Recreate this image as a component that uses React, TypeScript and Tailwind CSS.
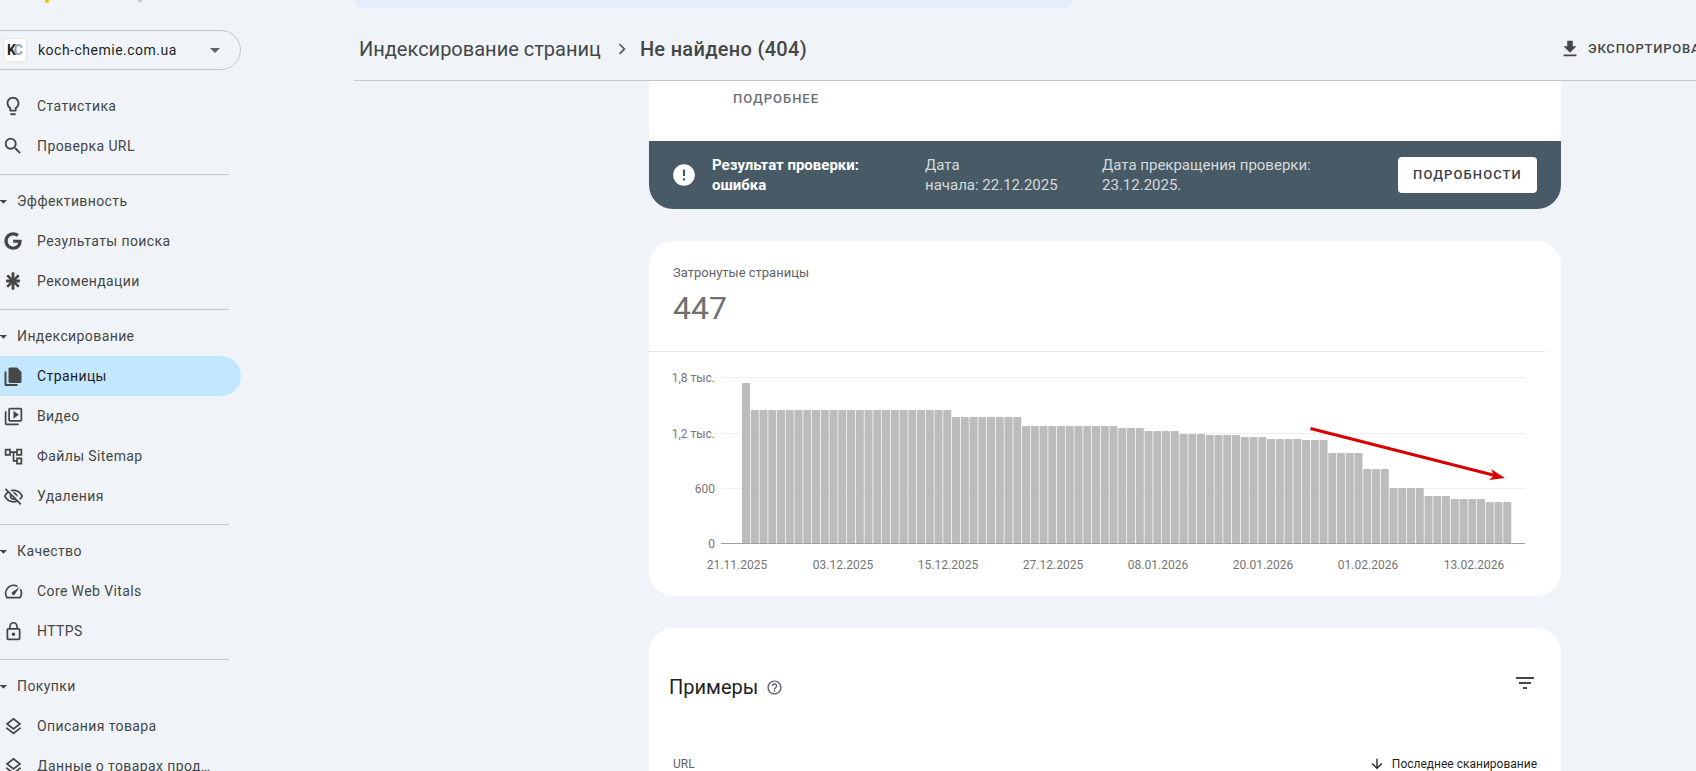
import React from "react";
import {
  MdOutlineLightbulb, MdSearch, MdOutlineVideoLibrary, MdOutlineAccountTree,
  MdOutlineVisibilityOff, MdOutlineSpeed, MdLockOutline, MdOutlineLayers, MdFileDownload,
  MdFilterList, MdHelpOutline, MdArrowDownward, MdChevronRight, MdArrowDropDown, MdError,
} from "react-icons/md";
import { FaGoogle } from "react-icons/fa";

const Asterisk = () => (
  <svg width="18" height="18" viewBox="0 0 18 18" fill="#444746">
    <rect x="7.6" y="0.3" width="2.8" height="17.4" rx="0.6" />
    <rect x="7.6" y="0.8" width="2.8" height="16.4" rx="0.6" transform="rotate(45 9 9)" />
    <rect x="7.6" y="2" width="2.8" height="14" rx="0.6" transform="rotate(90 9 9)" />
    <rect x="7.6" y="0.8" width="2.8" height="16.4" rx="0.6" transform="rotate(135 9 9)" />
  </svg>
);

const Pages = () => (
  <svg width="18" height="19" viewBox="0 0 18 19" fill="#444746">
    <path d="M6 0.5h7l4.5 4.5v9.5a1.5 1.5 0 0 1-1.5 1.5H6a1.5 1.5 0 0 1-1.5-1.5V2A1.5 1.5 0 0 1 6 0.5z" />
    <path d="M0.5 4.5h2v12.5h11v2H2a1.5 1.5 0 0 1-1.5-1.5z" />
  </svg>
);

function NavRow({ icon, label, active }: { icon: React.ReactNode; label: string; active?: boolean }) {
  return (
    <div className={active
      ? "h-10 w-[241px] flex items-center rounded-r-[20px] bg-[#c2e7ff] text-[#1f1f1f]"
      : "h-10 w-[241px] flex items-center text-[#444746]"}>
      <span className="w-[26px] mr-[11px] shrink-0 flex justify-center text-[#444746]">{icon}</span>
      <span className="text-[14px] tracking-[0.4px] whitespace-nowrap">{label}</span>
    </div>
  );
}

function Section({ label }: { label: string }) {
  return (
    <div className="h-10 flex items-center text-[#444746]">
      <span className="w-[17px] shrink-0 flex justify-center -ml-[5px] mr-[5px]"><MdArrowDropDown size={17} /></span>
      <span className="text-[14px] tracking-[0.4px]">{label}</span>
    </div>
  );
}

const Hr = () => <div className="h-px w-[229px] bg-[#c7c7c7] mt-2 mb-[6px]" />;

const groups: [number, number][] = [
  [383, 1], [410, 23], [417, 8], [426, 11], [428, 3], [431, 4], [434, 3], [435, 4], [437, 3],
  [439, 4], [440, 3], [453, 4], [469, 3], [488, 4], [496, 3], [499, 4], [502, 3],
];
const tops: number[] = groups.flatMap(([t, n]) => Array.from({ length: n }, () => t));
const PITCH = 770 / 88;

function Chart() {
  const xl: [string, number][] = [
    ["21.11.2025", 737], ["03.12.2025", 843], ["15.12.2025", 948], ["27.12.2025", 1053],
    ["08.01.2026", 1158], ["20.01.2026", 1263], ["01.02.2026", 1368], ["13.02.2026", 1474],
  ];
  const yl: [string, number][] = [["1,8 тыс.", 377], ["1,2 тыс.", 433], ["600", 488], ["0", 543]];
  return (
    <svg width="912" height="244" viewBox="649 352 912 244" className="block" style={{ fontFamily: "Roboto, sans-serif" }}>
      {[377, 433, 488].map((y) => (
        <line key={y} x1="721" x2="1525" y1={y + 0.5} y2={y + 0.5} stroke="#eeeeee" />
      ))}
      <line x1="721" x2="1525" y1="543.5" y2="543.5" stroke="#9e9e9e" />
      {tops.map((t, i) => (
        <rect key={i} x={742 + i * PITCH} y={t} width={PITCH - 0.7} height={543 - t} rx="1" fill="#bcbcbc" />
      ))}
      {yl.map(([s, y]) => (
        <text key={s} x="715" y={y + 5} textAnchor="end" fontSize="12" fill="#757575">{s}</text>
      ))}
      {xl.map(([s, x]) => (
        <text key={s} x={x} y="569" textAnchor="middle" fontSize="12" fill="#757575">{s}</text>
      ))}
      <line x1="1310.5" y1="428.5" x2="1495" y2="475.5" stroke="#d90000" strokeWidth="3.2" />
      <polygon points="1505,478 1489,480 1494,475.5 1491,469" fill="#d90000" />
    </svg>
  );
}

export default function App() {
  return (
    <div className="h-[771px] w-[1696px] overflow-hidden flex bg-[#f0f4f9] text-[#444746]" style={{ fontFamily: "Roboto, sans-serif" }}>
      {/* sidebar */}
      <aside className="w-[354px] shrink-0">
        <div className="h-[30px] relative">
          <span className="absolute left-[45px] -top-[1px] w-[4px] h-[4px] rounded-full bg-[#fbbc04]" />
          <span className="absolute left-[138px] -top-[1px] w-[4px] h-[3px] rounded-full bg-[#c4c7c5]" />
        </div>
        <div className="h-10 w-[261px] -ml-5 pl-[22px] border border-[#c4c7c5] rounded-full flex items-center mb-4">
          <span className="w-[24px] h-[24px] bg-white rounded-[2px] border border-[#e6e6e6] flex items-center justify-center text-[14px] font-bold text-[#222] shrink-0">
            K<span className="text-[#9aa0a6] -ml-[2px]">C</span>
          </span>
          <span className="ml-[11px] text-[14px] tracking-[0.5px] text-[#1f1f1f] whitespace-nowrap">koch-chemie.com.ua</span>
          <span className="ml-[26px] text-[#5f6368]"><MdArrowDropDown size={24} /></span>
        </div>
        <NavRow icon={<MdOutlineLightbulb size={22} />} label="Статистика" />
        <NavRow icon={<MdSearch size={22} />} label="Проверка URL" />
        <Hr />
        <Section label="Эффективность" />
        <NavRow icon={<FaGoogle size={18} />} label="Результаты поиска" />
        <NavRow icon={<Asterisk />} label="Рекомендации" />
        <Hr />
        <Section label="Индексирование" />
        <NavRow active icon={<Pages />} label="Страницы" />
        <NavRow icon={<MdOutlineVideoLibrary size={21} />} label="Видео" />
        <NavRow icon={<MdOutlineAccountTree size={21} />} label="Файлы Sitemap" />
        <NavRow icon={<MdOutlineVisibilityOff size={21} />} label="Удаления" />
        <Hr />
        <Section label="Качество" />
        <NavRow icon={<MdOutlineSpeed size={21} />} label="Core Web Vitals" />
        <NavRow icon={<MdLockOutline size={21} />} label="HTTPS" />
        <Hr />
        <Section label="Покупки" />
        <NavRow icon={<MdOutlineLayers size={21} />} label="Описания товара" />
        <NavRow icon={<MdOutlineLayers size={21} />} label="Данные о товарах прод…" />
      </aside>

      {/* main */}
      <main className="flex-1 min-w-0 flex flex-col">
        <div className="h-2 w-[717px] ml-px bg-[#e3edfc] rounded-b-[14px] shrink-0" />
        <header className="h-[73px] shrink-0 border-b border-[#c7c7c7] flex items-center pl-[5px] pt-[9px] overflow-hidden">
          <span className="text-[20px] text-[#444746] whitespace-nowrap">Индексирование страниц</span>
          <MdChevronRight size={22} className="ml-[10px] mr-[7px] text-[#5f6368] shrink-0" />
          <span className="text-[20px] font-medium tracking-[0.3px] text-[#444746] whitespace-nowrap">Не найдено (404)</span>
          <MdFileDownload size={22} className="ml-[752px] text-[#444746] shrink-0" />
          <span className="ml-[7px] text-[13px] font-medium tracking-[0.8px] text-[#444746] whitespace-nowrap">ЭКСПОРТИРОВАТЬ</span>
        </header>

        <div className="w-[912px] ml-[295px] flex flex-col gap-8">
          {/* card 1 */}
          <section className="h-[128px] bg-white rounded-b-[24px] overflow-hidden flex flex-col">
            <div className="h-[60px] pl-[84px] pt-2 text-[13px] font-medium tracking-[1px] text-[#6b6f72]">ПОДРОБНЕЕ</div>
            <div className="h-[68px] bg-[#485a65] flex items-center text-[15px] leading-5">
              <span className="w-[63px] flex justify-end shrink-0 pr-[15px]"><MdError size={26} className="text-white" /></span>
              <div className="w-[213px] shrink-0 font-bold text-white">Результат проверки:<br />ошибка</div>
              <div className="w-[177px] shrink-0 text-[#d5dadd]">Дата<br />начала: 22.12.2025</div>
              <div className="w-[296px] shrink-0 text-[#d5dadd]">Дата прекращения проверки:<br />23.12.2025.</div>
              <button className="w-[139px] h-9 bg-white rounded-[4px] text-[13px] font-medium tracking-[1.1px] text-[#3c4043]">ПОДРОБНОСТИ</button>
            </div>
          </section>

          {/* card 2 */}
          <section className="h-[355px] bg-white rounded-[24px]">
            <div className="h-[111px] border-b border-[#e3e3e3] mr-4 pl-6 pt-[24px]">
              <div className="text-[13px] leading-4 text-[#5f6368]">Затронутые страницы</div>
              <div className="text-[32px] leading-9 mt-[9px] text-[#6f6f6f]">447</div>
            </div>
            <Chart />
          </section>

          {/* card 3 */}
          <section className="h-[200px] bg-white rounded-[24px] px-6">
            <div className="flex items-start pt-[45px] -ml-1">
              <span className="text-[20px] leading-7 text-[#1f1f1f]">Примеры</span>
              <MdHelpOutline size={17} className="ml-2 mt-[6px] text-[#5f6368]" />
              <MdFilterList size={24} className="ml-auto -mt-[2px] mr-0 text-[#444746]" />
            </div>
            <div className="flex items-center mt-[54px] text-[12px]">
              <span className="text-[#5f6368]">URL</span>
              <MdArrowDownward size={16} className="ml-auto mr-[7px] text-[#1f1f1f]" />
              <span className="text-[#1f1f1f]">Последнее сканирование</span>
            </div>
          </section>
        </div>
      </main>
    </div>
  );
}
